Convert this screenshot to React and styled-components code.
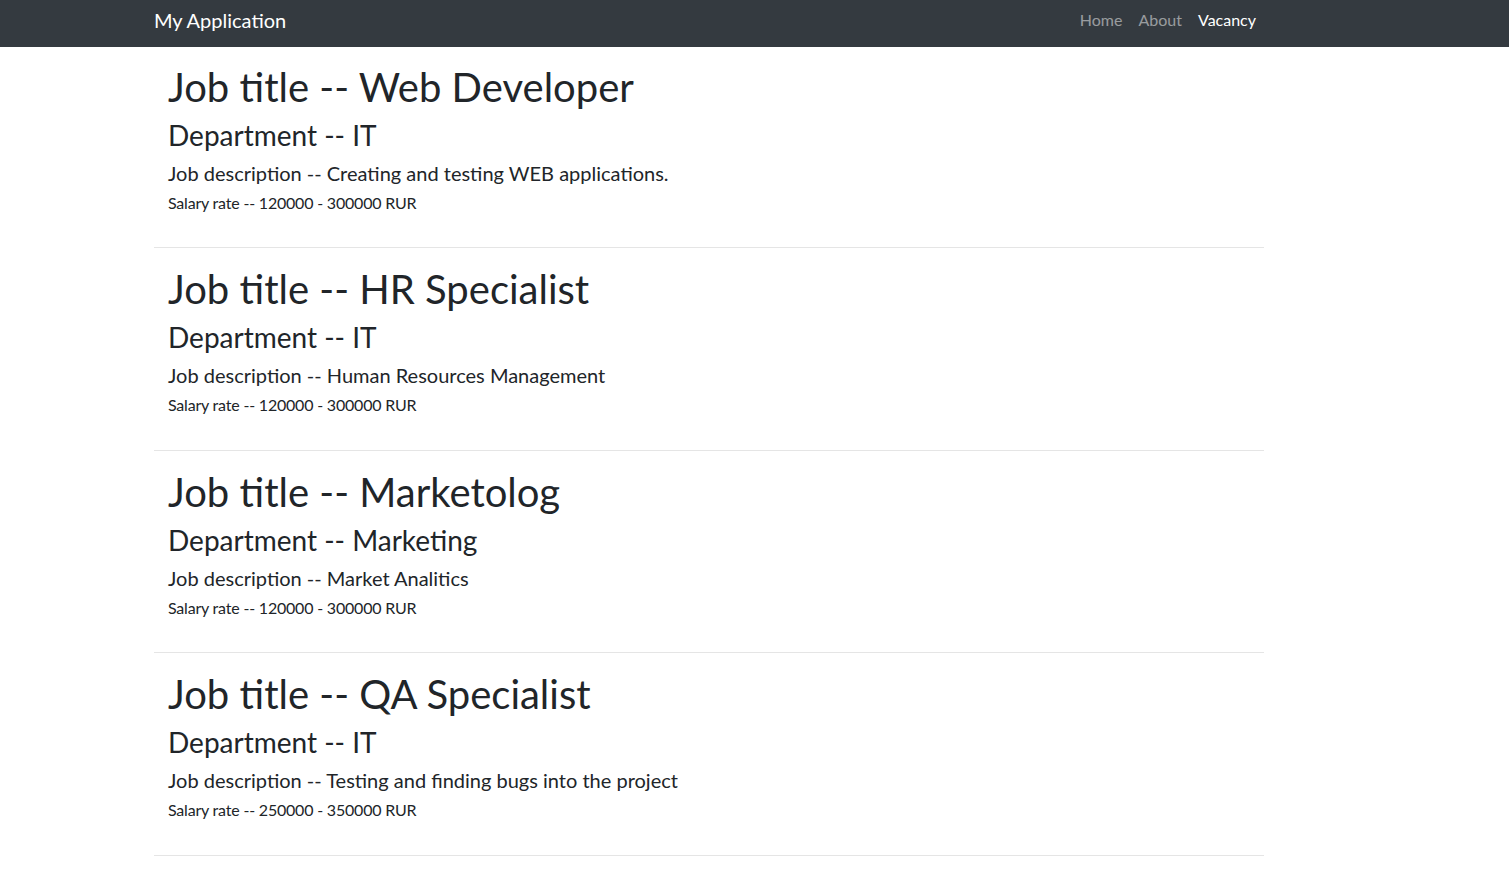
import React from "react";
import styled, { createGlobalStyle } from "styled-components";

const Global = createGlobalStyle`
  *, *::before, *::after { box-sizing: border-box; }
  body {
    margin: 0;
    background: #fff;
    color: #212529;
    font-family: Lato, "Noto Sans", sans-serif;
    font-size: 16px;
    line-height: 1.5;
  }
`;

const Navbar = styled.nav`
  background: #343a40;
  height: 47px;
`;

const NavInner = styled.div`
  width: 1110px;
  margin-left: 154px;
  height: 100%;
  display: flex;
  align-items: flex-start;
  justify-content: space-between;
`;

const Brand = styled.a`
  display: block;
  margin-top: 5px;
  color: #fff;
  font-size: 20px;
  line-height: 30px;
  text-decoration: none;
`;

const NavList = styled.ul`
  list-style: none;
  margin: 0;
  padding: 0;
  display: flex;
`;

const NavLink = styled.a`
  display: block;
  padding: 8px;
  font-size: 16px;
  line-height: 24px;
  text-decoration: none;
  color: ${(p) => (p.$active ? "#fff" : "rgba(255,255,255,0.5)")};
`;

const Main = styled.main`
  width: 1110px;
  margin-left: 154px;
`;

const Vacancy = styled.article`
  padding: 16px 14px 27.5px;
  border-bottom: 1px solid #e5e5e5;
  margin-bottom: 1.2px;
`;

const Title = styled.h1`
  margin: 0 0 8px;
  font-size: 40px;
  font-weight: 400;
  line-height: 1.2;
`;

const Department = styled.h3`
  margin: 0 0 8px;
  font-size: 28px;
  font-weight: 400;
  line-height: 1.2;
`;

const Description = styled.h5`
  margin: 0 0 8px;
  font-size: 20px;
  font-weight: 400;
  line-height: 1.2;
`;

const Salary = styled.h6`
  margin: 0 0 8px;
  font-size: 16px;
  font-weight: 400;
  line-height: 1.2;
  letter-spacing: -0.2px;
`;

const vacancies = [
  { title: "Web Developer", dept: "IT", desc: "Creating and testing WEB applications.", salary: "120000 - 300000 RUR" },
  { title: "HR Specialist", dept: "IT", desc: "Human Resources Management", salary: "120000 - 300000 RUR" },
  { title: "Marketolog", dept: "Marketing", desc: "Market Analitics", salary: "120000 - 300000 RUR" },
  { title: "QA Specialist", dept: "IT", desc: "Testing and finding bugs into the project", salary: "250000 - 350000 RUR" },
];

export default function App() {
  return (
    <>
      <Global />
      <Navbar>
        <NavInner>
          <Brand href="#">My Application</Brand>
          <NavList>
            <li><NavLink href="#">Home</NavLink></li>
            <li><NavLink href="#">About</NavLink></li>
            <li><NavLink href="#" $active>Vacancy</NavLink></li>
          </NavList>
        </NavInner>
      </Navbar>
      <Main>
        {vacancies.map((v) => (
          <Vacancy key={v.title}>
            <Title>Job title -- {v.title}</Title>
            <Department>Department -- {v.dept}</Department>
            <Description>Job description -- {v.desc}</Description>
            <Salary>Salary rate -- {v.salary}</Salary>
          </Vacancy>
        ))}
      </Main>
    </>
  );
}
